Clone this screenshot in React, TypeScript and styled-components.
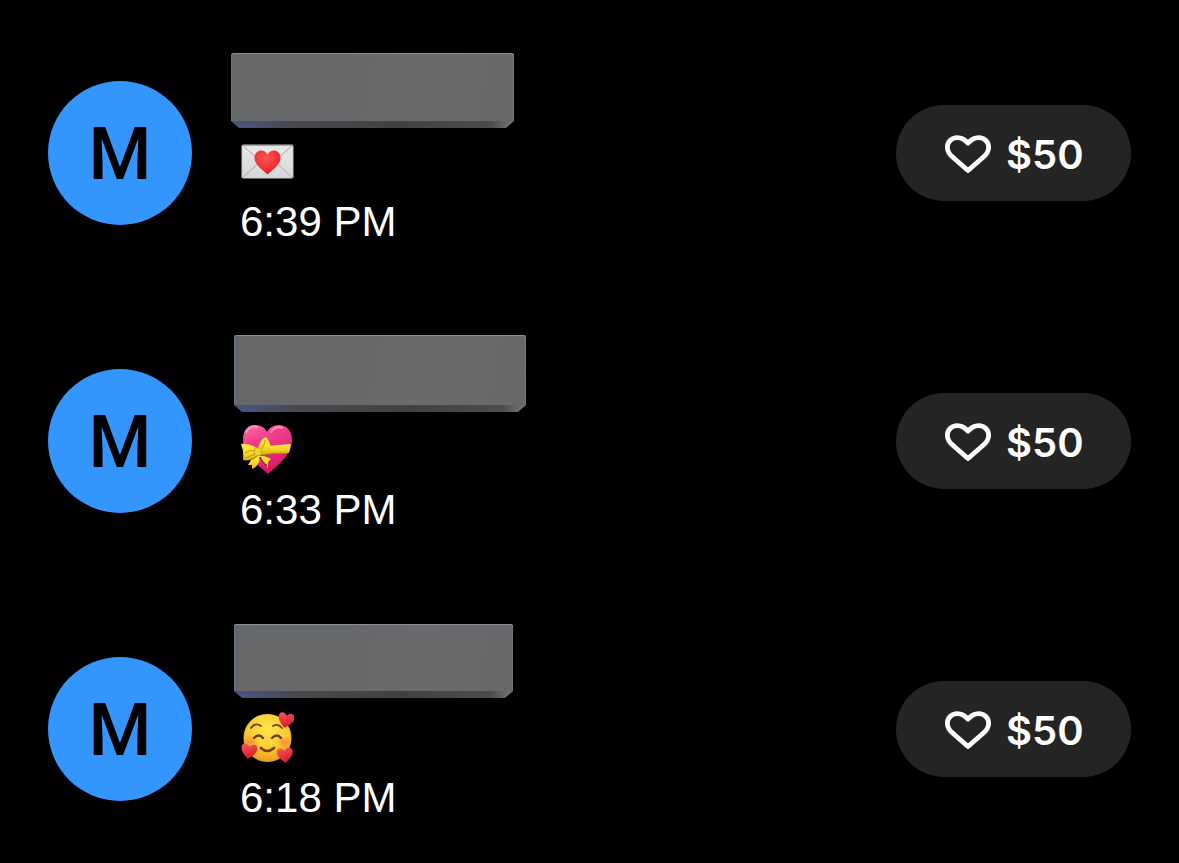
import React from "react";
import styled, { createGlobalStyle } from "styled-components";

const GlobalStyle = createGlobalStyle`
  *, *::before, *::after { box-sizing: border-box; }
  body {
    margin: 0;
    background: #000;
    color: #fff;
    font-family: "Liberation Sans", Arial, sans-serif;
  }
`;

const List = styled.ul`
  list-style: none;
  margin: 0;
  padding: 53px 48px 32px;
  display: flex;
  flex-direction: column;
  gap: 88px;
`;

const Row = styled.li`
  display: flex;
  align-items: center;
  height: 200px;
`;

const Avatar = styled.div`
  flex: none;
  display: flex;
  align-items: center;
  justify-content: center;
  width: 144px;
  height: 144px;
  padding-top: 4px;
  border-radius: 50%;
  background: #3396ff;
  color: #000;
  font: 500 72px/72px Roboto, sans-serif;
`;

const Details = styled.div`
  flex: 1;
  min-width: 0;
  align-self: stretch;
  margin-left: 48px;
`;

const Name = styled.div`
  position: relative;
  height: 80px;
`;

interface Box {
  x: number;
  y: number;
  w: number;
  h: number;
}

const Cover = styled.div<{ $box: Box }>`
  position: absolute;
  left: ${(p) => p.$box.x}px;
  top: ${(p) => p.$box.y}px;
  width: ${(p) => p.$box.w}px;
  height: ${(p) => p.$box.h}px;
  border-radius: 3px 3px 0 0;
  background: linear-gradient(90deg, #4a5684 0, #48494d 22%, #414143 60%, #4c4c4e 92%, #777 100%);
  clip-path: polygon(0 0, 100% 0, 100% calc(100% - 7px), calc(100% - 8px) 100%, 8px 100%, 0 calc(100% - 7px));

  &::before {
    content: "";
    position: absolute;
    inset: 0 0 7px;
    border-radius: 3px 3px 0 0;
    background: linear-gradient(100deg, #666769, #676869 40%, #6b6b6d 65%, #68686a);
    box-shadow: inset 1px 0 #66718c, inset 0 1px #8b8e94, inset -1px 0 #747476;
  }
`;

const Note = styled.div`
  display: flex;
  align-items: center;
  height: 56px;

  svg { display: block; width: 54px; height: 54px; }
`;

const Time = styled.time`
  display: block;
  font-size: 42px;
  line-height: 66px;
  white-space: nowrap;
`;

const LikeButton = styled.button`
  flex: none;
  display: flex;
  align-items: center;
  justify-content: flex-start;
  gap: 14px;
  width: 235px;
  height: 96px;
  padding: 0 0 0 48px;
  border: 0;
  border-radius: 48px;
  background: #242424;
  color: #fff;
  font: 600 40px/48px Inter, sans-serif;
  cursor: pointer;

  svg { display: block; width: 48px; height: 40px; }
  span { padding-top: 4px; }
`;

const HeartIcon = () => (
  <svg viewBox="0 0 48 40" fill="none" stroke="currentColor" strokeWidth="4.8" strokeLinejoin="round" aria-hidden="true">
    <path d="M24 10.200C20.700 6.400 17.700 4.700 13.300 4.700C7.300 4.700 3.400 9 3.400 14.500C3.400 18.300 5 20.800 8 23.500L24 37.500L40 23.500C43 20.800 44.600 18.300 44.600 14.500C44.600 9 40.700 4.700 34.700 4.700C30.300 4.700 27.300 6.400 24 10.200Z" />
  </svg>
);

const LoveLetter = () => (
  <svg viewBox="0 0 54 54" role="img" aria-label="Love letter">
    <defs>
      <linearGradient id="paper" x2="0" y2="1"><stop stopColor="#e9e9e9" /><stop offset="1" stopColor="#d7d7d7" /></linearGradient>
      <radialGradient id="seal" cx=".45" cy=".3" r=".75"><stop stopColor="#ff5552" /><stop offset=".65" stopColor="#ef3037" /><stop offset="1" stopColor="#bd1c25" /></radialGradient>
    </defs>
    <rect x="2" y="11" width="51" height="33" rx="1" fill="url(#paper)" stroke="#c5c5c5" />
    <path d="M2.5 43.5 21 27M52.5 43.5 34 27" stroke="#aaa" strokeWidth="1" />
    <path d="M2.5 11.5 24 30q3.500 3 7 0L52.500 11.500Z" fill="#e5e6e5" stroke="#a5a6a5" strokeWidth="1" />
    <path d="M27.500 40.500C23 36 14.500 31 14.500 24C14.500 16 24 14 27.500 20.500C31 14 40.500 16 40.500 24C40.500 31 32 36 27.500 40.500Z" fill="url(#seal)" />
  </svg>
);

const RibbonHeart = () => (
  <svg viewBox="0 0 54 54" role="img" aria-label="Heart with ribbon">
    <defs>
      <linearGradient id="pink" x2=".4" y2="1"><stop stopColor="#ff73ae" /><stop offset=".35" stopColor="#f0408f" /><stop offset="1" stopColor="#dc1669" /></linearGradient>
      <linearGradient id="ribbon" x2="0" y2="1"><stop stopColor="#ffee48" /><stop offset=".6" stopColor="#f8d820" /><stop offset="1" stopColor="#d5ac0d" /></linearGradient>
    </defs>
    <path d="M28 52C21 45 3 34 3 18C3 8 8 3 15 3C21 3 25 6 27 10C29 6 33 3 39 3C46 3 52 8 52 18C52 34 35 45 28 52Z" fill="url(#pink)" />
    <path d="M6 10Q10 3 17 5M31 10Q36 3 42 6" stroke="#ffa6cc" strokeWidth="2" fill="none" strokeLinecap="round" opacity=".7" />
    <path d="M28 24Q38 23 51 22L49 31Q38 32 28 31Z" fill="url(#ribbon)" />
    <path d="M14 33 8 43 12 43 12 47Q20 44 20 34Z" fill="url(#ribbon)" />
    <path d="M18 33Q26 34 31 37L28 40 28 46 24 43Q19 39 18 34Z" fill="url(#ribbon)" />
    <path d="M20 35Q21 40 27 44" stroke="#b81758" strokeWidth="2" fill="none" />
    <path d="M17 26Q8 21 1 22Q4 29 3 38Q11 40 18 33Z" fill="url(#ribbon)" />
    <path d="M18 27Q20 17 26 15Q32 21 31 32Q25 34 19 32Z" fill="url(#ribbon)" />
    <path d="M5 31Q10 27 16 29M22 27Q25 22 25 18M6 36 15 32" fill="none" stroke="#c49a12" strokeWidth="1" />
    <path d="M10 38Q15 36 18 33Q25 34 30 32" stroke="#836116" strokeWidth="1" fill="none" />
    <path d="M15 26Q18 25 21 27L21 33Q17 35 14 32Z" fill="#f5d52b" stroke="#c79b18" strokeWidth=".7" />
  </svg>
);

const SMALL_HEART = "M0 8C-3 5-8 2-8-3C-8-8-2-8 0-4C2-8 8-8 8-3C8 2 3 5 0 8Z";

const LovingFace = () => (
  <svg viewBox="0 0 54 54" role="img" aria-label="Smiling face with hearts">
    <defs>
      <radialGradient id="face" cx=".5" cy=".32" r=".68"><stop stopColor="#ffe84b" /><stop offset=".6" stopColor="#fcca34" /><stop offset="1" stopColor="#e99b18" /></radialGradient>
      <radialGradient id="blush"><stop stopColor="#fa7338" stopOpacity=".65" /><stop offset="1" stopColor="#fa7338" stopOpacity="0" /></radialGradient>
      <linearGradient id="love" x2=".5" y2="1"><stop stopColor="#ff5960" /><stop offset="1" stopColor="#d6192b" /></linearGradient>
    </defs>
    <circle cx="27.500" cy="28" r="24" fill="url(#face)" />
    <ellipse cx="11" cy="32" rx="8" ry="6" fill="url(#blush)" />
    <ellipse cx="44" cy="32" rx="8" ry="6" fill="url(#blush)" />
    <g fill="none" stroke="#70411a" strokeLinecap="round">
      <path d="M11 18Q15 12 21 16M33 16Q38 13 42 18" strokeWidth="1.800" />
      <path d="M14 28Q19 23 23 28M32 28Q37 23 41 28" strokeWidth="2.400" />
      <path d="M21 38Q27 44 34 38" strokeWidth="2.600" />
    </g>
    <path d={SMALL_HEART} transform="translate(46 10) rotate(12)" fill="url(#love)" />
    <path d={SMALL_HEART} transform="translate(9 41) rotate(9)" fill="url(#love)" />
    <path d={SMALL_HEART} transform="translate(45 45) rotate(-5)" fill="url(#love)" />
  </svg>
);

const payments = [
  { time: "6:39 PM", note: <LoveLetter />, box: { x: -9, y: 0, w: 283, h: 75 } },
  { time: "6:33 PM", note: <RibbonHeart />, box: { x: -6, y: -6, w: 292, h: 77 } },
  { time: "6:18 PM", note: <LovingFace />, box: { x: -6, y: -5, w: 279, h: 74 } },
];

export default function App() {
  return (
    <>
      <GlobalStyle />
      <List>
        {payments.map(({ time, note, box }) => (
          <Row key={time}>
            <Avatar>M</Avatar>
            <Details>
              <Name><Cover $box={box} /></Name>
              <Note>{note}</Note>
              <Time>{time}</Time>
            </Details>
            <LikeButton type="button">
              <HeartIcon />
              <span>$50</span>
            </LikeButton>
          </Row>
        ))}
      </List>
    </>
  );
}
